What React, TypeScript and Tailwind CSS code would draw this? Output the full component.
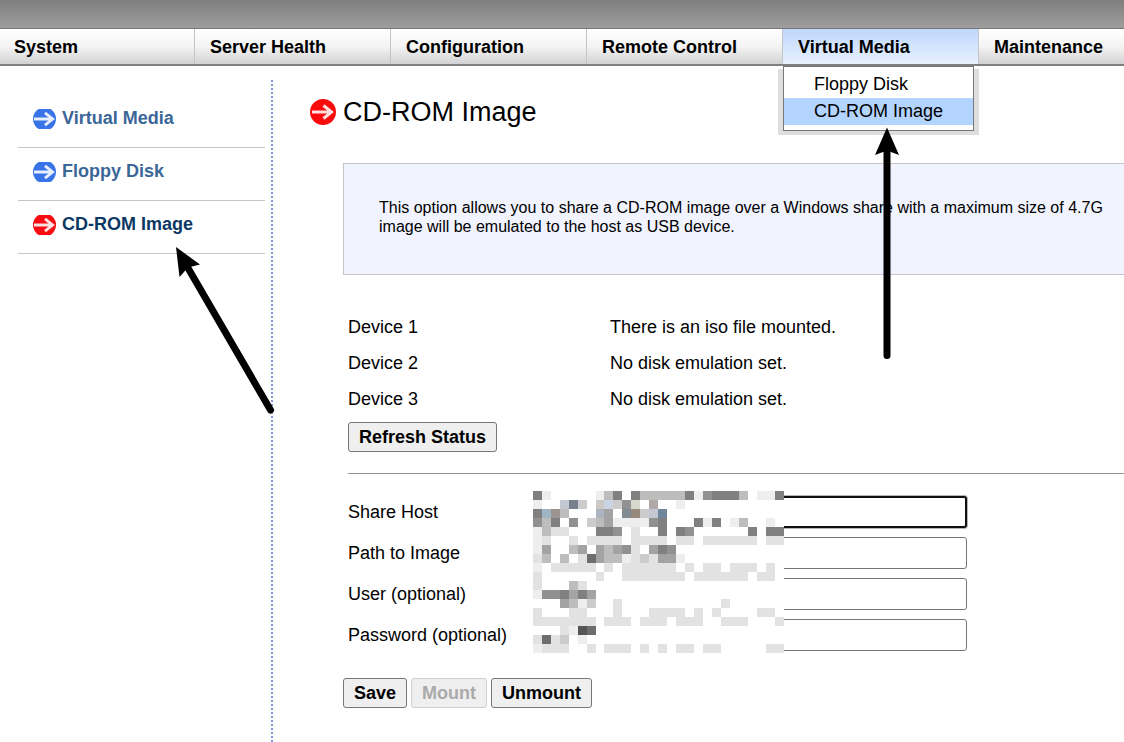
import { useState } from "react";

const tabs = ["System", "Server Health", "Configuration", "Remote Control", "Virtual Media", "Maintenance"];
const mediaPages = ["Floppy Disk", "CD-ROM Image"];
const sideLinks = ["Virtual Media", "Floppy Disk", "CD-ROM Image"];

const devices = [
  { name: "Device 1", status: "There is an iso file mounted." },
  { name: "Device 2", status: "No disk emulation set." },
  { name: "Device 3", status: "No disk emulation set." },
];

const fields = [
  { id: "host", label: "Share Host", type: "text" },
  { id: "path", label: "Path to Image", type: "text" },
  { id: "user", label: "User (optional)", type: "text" },
  { id: "password", label: "Password (optional)", type: "password" },
];

const mosaicColors: Record<string, string> = {
  a: "#eeeeee", b: "#e2e2e2", c: "#cccccc", d: "#bdbdbd", e: "#a3a3a3",
  f: "#919191", g: "#808080", h: "#6d6d6d", i: "#555555",
  "1": "#c3c8d3", "2": "#77808d", "3": "#ccc9c4", "4": "#cbd4e4", "5": "#d8d9ce",
  "6": "#b0a9a8", "7": "#9fb5c4", "8": "#9d9492", "9": "#abb5c0",
  A: "#818b93", B: "#978a7c", C: "#70869a",
};

const mosaic = [
  "ga.....adg.gdddddgafgggd.aag",
  "a..12c.34cf5.6..a...........",
  "g78d...9e.ABc1C.............",
  "fdg.f.cdeaaaafg...gag.ad..a.",
  "adbb...ggf.b..g.gf......g.gg",
  "ab..b.bbbb.bbbb.bb.bbbbbb.bb",
  "ae..de.edefb.egf............",
  "bd.d.bheddabcbeea...........",
  "a.bbbbb.b.bbbbbb.b.bb.bbb.b.",
  "b......b..bbbbbbb.bbbbbb.bb.",
  "b...db......................",
  "affgege.....................",
  "...edac..b...........b......",
  "b...bb...b...bbbb.b.b....bb.",
  "bbbbbbb.bbb.bbb.bbb..bbb...b",
  "...baih.....................",
  "bhbc.a......................",
  "abbb..b.bbb.b.b.bb.bb.....bb",
];

function Mosaic() {
  return (
    <svg className="absolute -top-[5px] left-[185px] h-[162px] w-[251px]" viewBox="0 0 251 162" shapeRendering="crispEdges" aria-hidden="true">
      <rect width="251" height="162" fill="#fff" />
      {mosaic.flatMap((row, y) =>
        row.split("").map((c, x) =>
          c === "." ? null : (
            <rect key={`${x}-${y}`} x={x > 7 ? x * 9 - 1 : x * 9} y={y * 9} width={x === 7 ? 8 : 9} height="9" fill={mosaicColors[c]} />
          ),
        ),
      )}
    </svg>
  );
}

function ArrowBadge({ className, cropped }: { className: string; cropped?: boolean }) {
  return (
    <svg className={className} viewBox={cropped ? "1 3 24 20" : "0 0 26 26"} aria-hidden="true">
      <circle cx="13" cy="13" r={cropped ? "12" : "13"} fill="currentColor" />
      <path d="M2 13H21.500M13.500 6.500l8 6.500-8 6.500" fill="none" stroke="#fff" strokeOpacity="0.88" strokeWidth="3" />
    </svg>
  );
}

const button =
  "h-[30px] rounded-[3px] border border-[#767676] bg-[#efefef] px-[10px] text-[18px] leading-[28px] font-bold text-black disabled:border-[#d0d0d0] disabled:text-[#aaaaaa]";

export default function App() {
  const [values, setValues] = useState<Record<string, string>>({});
  return (
    <div className="relative min-h-screen overflow-hidden bg-white font-['Liberation_Sans',Arial,sans-serif] text-[18px] leading-[21px] text-black">
      <header>
        <div className="h-7 bg-linear-to-b from-[#7f7f7f] to-[#9e9e9e]" />
        <nav className="flex h-[38px] border-t border-b-2 border-t-[#777] border-b-[#7f7f7f] bg-linear-to-b from-white via-[#f4f4f4] to-[#d2d2d4] font-bold">
          {tabs.map((tab, i) => {
            const open = tab === "Virtual Media";
            return (
              <div
                key={tab}
                className={`relative shrink-0 border-r border-[#c4c4c4] ${i === 0 ? "w-[195px] pl-[14px]" : "w-[196px]"} ${open ? "bg-linear-to-b from-[#bed7fc] to-[#e8f1ff]" : ""}`}
              >
                <a href="#" className={`flex h-full items-center pt-[2px] ${i === 0 ? "" : "pl-[15px]"}`}>{tab}</a>
                {open && (
                  <div className="absolute top-[40px] -left-[5px] z-10 bg-[#dedede] pr-[5px] pb-1 pl-[5px] font-normal">
                    <ul className="-mt-[3px] w-[191px] border border-[#777] bg-white pt-1 pb-[5px]">
                      {mediaPages.map((page) => (
                        <li key={page}>
                          <a href="#" className={`flex h-[27px] items-center pl-[30px] whitespace-nowrap ${page === "CD-ROM Image" ? "bg-[#b3d4ff]" : ""}`}>
                            {page}
                          </a>
                        </li>
                      ))}
                    </ul>
                  </div>
                )}
              </div>
            );
          })}
        </nav>
      </header>

      <div className="flex pt-[14px]">
        <aside className="min-h-[662px] w-[273px] shrink-0 pt-[14px] pr-2 pl-[18px]">
          <ul>
            {sideLinks.map((link, i) => {
              const current = i === 2;
              return (
                <li key={link} className="border-b border-[#c6c6c6] pt-[13px] pb-[18px] first:pt-[14px]">
                  <a href="#" className={`flex items-center gap-[6px] pl-[15px] font-bold ${current ? "text-[#0b3765]" : "text-[#3a6698]"}`}>
                    <ArrowBadge cropped className={`h-5 w-[23px] ${current ? "text-[#f80c12]" : "text-[#3874e8]"}`} />
                    {link}
                  </a>
                </li>
              );
            })}
          </ul>
        </aside>
        <div className="-ml-[2px] w-[2px] shrink-0 bg-[repeating-linear-gradient(to_bottom,#8494d8_0px,#8494d8_2px,#fff_2px,#fff_4px)]" />

        <main className="min-w-0 flex-1 pt-4 pl-[37px]">
          <h1 className="flex h-8 items-center gap-[7px] text-[27px] leading-8">
            <ArrowBadge className="h-[26px] w-[26px] text-[#fa0a0a]" />
            CD-ROM Image
          </h1>
          <div className="pl-[33px]">
            <p className="mt-[35px] h-[112px] border border-r-0 border-[#c4c4cc] bg-[#f1f3ff] pt-[34px] pl-[35px] text-[16px] leading-[19px] whitespace-nowrap">
              This option allows you to share a CD-ROM image over a Windows share with a maximum size of 4.7G
              <br />
              image will be emulated to the host as USB device.
            </p>

            <div className="pt-[34px] pl-[5px]">
              <table>
                <tbody>
                  {devices.map((d) => (
                    <tr key={d.name} className="h-9">
                      <th scope="row" className="w-[262px] text-left font-normal">{d.name}</th>
                      <td>{d.status}</td>
                    </tr>
                  ))}
                </tbody>
              </table>
              <button type="button" className={`${button} mt-[5px] block`}>Refresh Status</button>
              <hr className="mt-[21px] border-t border-[#949494]" />
            </div>

            <form onSubmit={(e) => e.preventDefault()}>
              <div className="relative mt-[22px] ml-[5px] flex flex-col gap-[9px]">
                {fields.map((f) => (
                  <div key={f.id} className="flex h-8 items-center">
                    <label htmlFor={f.id} className="w-[188px] shrink-0">{f.label}</label>
                    <input
                      id={f.id}
                      type={f.type}
                      value={values[f.id] ?? ""}
                      onChange={(e) => setValues({ ...values, [f.id]: e.target.value })}
                      className={`h-8 w-[431px] rounded-[3px] bg-white px-2 outline-none ${f.id === "host" ? "border-2 border-[#101010] ring-1 ring-[#b5b5b5]" : "border border-[#767676]"}`}
                    />
                  </div>
                ))}
                <Mosaic />
              </div>
              <div className="mt-[27px] flex gap-1 pb-8">
                <button type="submit" className={button}>Save</button>
                <button type="button" disabled className={button}>Mount</button>
                <button type="button" className={button}>Unmount</button>
              </div>
            </form>
          </div>
        </main>
      </div>

      <svg className="pointer-events-none absolute top-[246px] left-[174px] z-20 h-[170px] w-[102px]" viewBox="174 246 102 170" aria-hidden="true">
        <path d="M188 268 270.500 410" stroke="#000" strokeWidth="7" strokeLinecap="round" />
        <path d="M176 247 200 264.500 188 267.500 179.500 277Z" />
      </svg>
      <svg className="pointer-events-none absolute top-[126px] left-[872px] z-20 h-[236px] w-[30px]" viewBox="872 126 30 236" aria-hidden="true">
        <path d="M887 150V355.500" stroke="#000" strokeWidth="7" strokeLinecap="round" />
        <path d="M887 127.500 899 155 887 150.500 875 155Z" />
      </svg>
    </div>
  );
}
